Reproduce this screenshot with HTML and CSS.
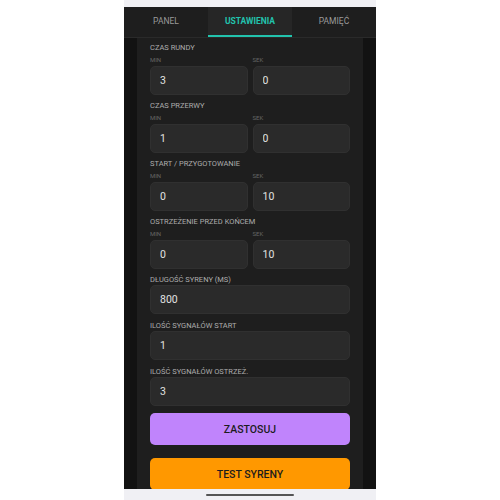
FILE: index.html
```html
<!DOCTYPE html>
<html lang="pl">
<head>
    <meta charset="UTF-8">
    <meta name="viewport" content="width=device-width, initial-scale=1.0">
    <title>Ustawienia</title>
    <link rel="stylesheet" href="styles.css">
</head>
<body>
    <div class="phone">
        <div class="status-bar"></div>
        <div class="tabs">
            <div class="tab">PANEL</div>
            <div class="tab active">USTAWIENIA</div>
            <div class="tab">PAMIĘĆ</div>
        </div>
        <div class="screen">
            <div class="panel">
                <div class="group">
                    <div class="group-label">CZAS RUNDY</div>
                    <div class="pair">
                        <div class="field">
                            <div class="sub-label">MIN</div>
                            <input class="box" type="text" value="3">
                        </div>
                        <div class="field">
                            <div class="sub-label">SEK</div>
                            <input class="box" type="text" value="0">
                        </div>
                    </div>
                </div>
                <div class="group">
                    <div class="group-label">CZAS PRZERWY</div>
                    <div class="pair">
                        <div class="field">
                            <div class="sub-label">MIN</div>
                            <input class="box" type="text" value="1">
                        </div>
                        <div class="field">
                            <div class="sub-label">SEK</div>
                            <input class="box" type="text" value="0">
                        </div>
                    </div>
                </div>
                <div class="group">
                    <div class="group-label">START / PRZYGOTOWANIE</div>
                    <div class="pair">
                        <div class="field">
                            <div class="sub-label">MIN</div>
                            <input class="box" type="text" value="0">
                        </div>
                        <div class="field">
                            <div class="sub-label">SEK</div>
                            <input class="box" type="text" value="10">
                        </div>
                    </div>
                </div>
                <div class="group">
                    <div class="group-label">OSTRZEŻENIE PRZED KOŃCEM</div>
                    <div class="pair">
                        <div class="field">
                            <div class="sub-label">MIN</div>
                            <input class="box" type="text" value="0">
                        </div>
                        <div class="field">
                            <div class="sub-label">SEK</div>
                            <input class="box" type="text" value="10">
                        </div>
                    </div>
                </div>
                <div class="group single">
                    <div class="group-label">DŁUGOŚĆ SYRENY (MS)</div>
                    <input class="box" type="text" value="800">
                </div>
                <div class="group single">
                    <div class="group-label">ILOŚĆ SYGNAŁÓW START</div>
                    <input class="box" type="text" value="1">
                </div>
                <div class="group single">
                    <div class="group-label">ILOŚĆ SYGNAŁÓW OSTRZEŻ.</div>
                    <input class="box" type="text" value="3">
                </div>
                <button class="btn btn-apply">ZASTOSUJ</button>
                <button class="btn btn-test">TEST SYRENY</button>
            </div>
        </div>
        <div class="nav-bar">
            <div class="handle"></div>
        </div>
    </div>
</body>
</html>
```

FILE: styles.css
```css
body {
    margin: 0;
    padding: 0;
    background: #ffffff;
    font-family: Roboto, "Liberation Sans", sans-serif;
}
.phone {
    width: 252px;
    height: 500px;
    margin: 0 auto;
    display: flex;
    flex-direction: column;
    overflow: hidden;
}
.status-bar {
    height: 7px;
    background: #f1f1f5;
    flex-shrink: 0;
}
.tabs {
    height: 30px;
    display: flex;
    background: #1e1e1e;
    border-bottom: 1px solid #2a2a2a;
    flex-shrink: 0;
}
.tab {
    flex: 1;
    display: flex;
    align-items: center;
    justify-content: center;
    font-size: 8.5px;
    color: #9a9a9a;
    box-sizing: border-box;
    border-bottom: 2px solid transparent;
}
.tab.active {
    background: #262626;
    color: #22c3ad;
    font-weight: 700;
    border-bottom-color: #22c3ad;
}
.screen {
    flex: 1;
    min-height: 0;
    background: #121212;
    padding: 0 13px;
    overflow: hidden;
}
.panel {
    background: #1e1e1e;
    padding: 5px 13px 20px;
    display: flex;
    flex-direction: column;
}
.group {
    margin-bottom: 6px;
}
.group.single {
    margin-bottom: 7px;
}
.group-label {
    font-size: 7.5px;
    line-height: 9px;
    color: #adadad;
}
.group.single .group-label {
    line-height: 10px;
}
.pair {
    display: flex;
    gap: 5px;
}
.field {
    flex: 1;
    min-width: 0;
}
.sub-label {
    font-size: 6px;
    line-height: 8px;
    margin-top: 4px;
    margin-bottom: 2px;
    color: #666666;
}
.box {
    display: block;
    width: 100%;
    height: 29px;
    box-sizing: border-box;
    margin: 0;
    padding: 0 9px;
    background: #2a2a2a;
    border: 1px solid #303030;
    border-radius: 5px;
    color: #e2e2e2;
    font-family: Roboto, "Liberation Sans", sans-serif;
    font-size: 10.5px;
    outline: none;
}
.btn {
    height: 32px;
    border: none;
    border-radius: 5px;
    font-family: Roboto, "Liberation Sans", sans-serif;
    font-size: 10.5px;
    font-weight: 500;
    color: #1c1c1c;
    padding: 0;
}
.btn-apply {
    background: #c084fc;
    margin-bottom: 13px;
}
.btn-test {
    background: #ff9800;
}
.nav-bar {
    height: 11px;
    background: #f0f0f4;
    flex-shrink: 0;
    display: flex;
    justify-content: center;
    align-items: center;
}
.handle {
    width: 88px;
    height: 2px;
    border-radius: 1px;
    background: #555555;
}
```
